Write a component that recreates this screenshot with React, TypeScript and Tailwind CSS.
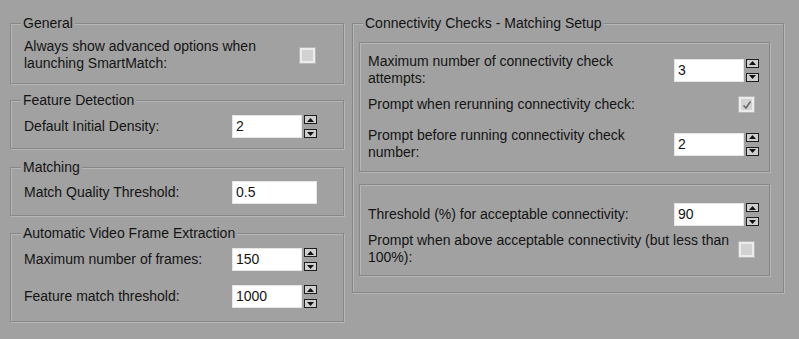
import type { ReactNode } from 'react';

// etched group-box border, like the classic Windows options dialog
const etched = 'border border-[#878787] shadow-[inset_1px_1px_0_#b6b6b6,1px_1px_0_#b6b6b6]';

const Group = ({ title, className, children }: { title: string; className?: string; children: ReactNode }) => (
  <fieldset className={`${etched} ${className ?? ''}`}>
    <legend className="ml-[10px] px-[2px] h-4 text-[14px] leading-4 bg-[#a1a1a1]">{title}</legend>
    {children}
  </fieldset>
);

const Arrow = ({ up }: { up?: boolean }) => (
  <div className="w-[13px] h-[9px] border border-[#1e1e1e] bg-[#cfcfcf] flex items-center justify-center">
    <svg width="7" height="4" viewBox="0 0 7 4">
      {up ? <polygon points="0,4 7,4 3.5,0" fill="#111" /> : <polygon points="0,0 7,0 3.5,4" fill="#111" />}
    </svg>
  </div>
);

const NumberBox = ({ value, spin = true }: { value: string; spin?: boolean }) => (
  <div className="flex items-stretch h-[23px]">
    <div
      className={`${spin ? 'w-[70px]' : 'w-[85px]'} h-[23px] bg-white border border-[#e6e6e6] pl-[3px] flex items-center text-[14px] text-[#151515]`}
    >
      {value}
    </div>
    {spin && (
      <div className="ml-[2px] flex flex-col justify-between">
        <Arrow up />
        <Arrow />
      </div>
    )}
  </div>
);

const Check = ({ checked }: { checked?: boolean }) => (
  <div className="w-[15px] h-[15px] border-2 border-[#ececec] bg-[#d2d2d2] shadow-[0_0_0_1px_#b8b8b8] flex items-center justify-center">
    {checked && (
      <svg width="10" height="10" viewBox="0 0 10 10">
        <path d="M1.5 5.5 L4 8 L8.5 1.5" stroke="#6a6a6a" strokeWidth="1.6" fill="none" />
      </svg>
    )}
  </div>
);

export default function App() {
  return (
    <main
      className="w-[799px] h-[339px] bg-[#a1a1a1] text-[#141414] text-[14px] leading-[17px] flex pl-[10px] pt-[15px] gap-[8px] overflow-hidden"
      style={{ fontFamily: '"Liberation Sans", Arial, sans-serif' }}
    >
      {/* left column */}
      <div className="w-[334px] flex flex-col">
        <Group title="General">
          <div className="pl-[13px] pr-[26px] pt-[7px] pb-[11px] flex items-center">
            <span className="flex-1 pr-2">Always show advanced options when launching SmartMatch:</span>
            <div className="mr-[2px]">
              <Check />
            </div>
          </div>
        </Group>

        <Group title="Feature Detection" className="mt-[8px]">
          <div className="pl-[13px] pr-[26px] pt-[7px] pb-[10px] flex items-center">
            <span className="flex-1">Default Initial Density:</span>
            <NumberBox value="2" />
          </div>
        </Group>

        <Group title="Matching" className="mt-[10px]">
          <div className="pl-[13px] pr-[26px] pt-[6px] pb-[11px] flex items-center">
            <span className="flex-1">Match Quality Threshold:</span>
            <NumberBox value="0.5" spin={false} />
          </div>
        </Group>

        <Group title="Automatic Video Frame Extraction" className="mt-[9px]">
          <div className="pl-[13px] pr-[26px] pt-[7px] pb-[13px] flex flex-col gap-[14px]">
            <div className="flex items-center">
              <span className="flex-1">Maximum number of frames:</span>
              <NumberBox value="150" />
            </div>
            <div className="flex items-center">
              <span className="flex-1">Feature match threshold:</span>
              <NumberBox value="1000" />
            </div>
          </div>
        </Group>
      </div>

      {/* right column */}
      <div className="w-[432px]">
        <Group title="Connectivity Checks - Matching Setup">
          <div className="pl-[6px] pr-[13px] pt-[11px] pb-[16px] flex flex-col gap-[12px]">
            <div className={`${etched} pl-[8px] pr-[10px] pt-[10px] pb-[10px] flex flex-col`}>
              <div className="flex items-center h-[34px]">
                <span className="flex-1 pr-1">Maximum number of connectivity check attempts:</span>
                <NumberBox value="3" />
              </div>
              <div className="flex items-center h-[17px] mt-[9px]">
                <span className="flex-1">Prompt when rerunning connectivity check:</span>
                <div className="mr-[5px]">
                  <Check checked />
                </div>
              </div>
              <div className="flex items-center h-[34px] mt-[14px]">
                <span className="flex-1 pr-1">Prompt before running connectivity check number:</span>
                <NumberBox value="2" />
              </div>
            </div>

            <div className={`${etched} pl-[8px] pr-[10px] pt-[18px] pb-[9px] flex flex-col`}>
              <div className="flex items-center h-[23px]">
                <span className="flex-1">Threshold (%) for acceptable connectivity:</span>
                <NumberBox value="90" />
              </div>
              <div className="flex items-center h-[34px] mt-[6px]">
                <span className="flex-1">Prompt when above acceptable connectivity (but less than 100%):</span>
                <div className="mr-[5px]">
                  <Check />
                </div>
              </div>
            </div>
          </div>
        </Group>
      </div>
    </main>
  );
}
